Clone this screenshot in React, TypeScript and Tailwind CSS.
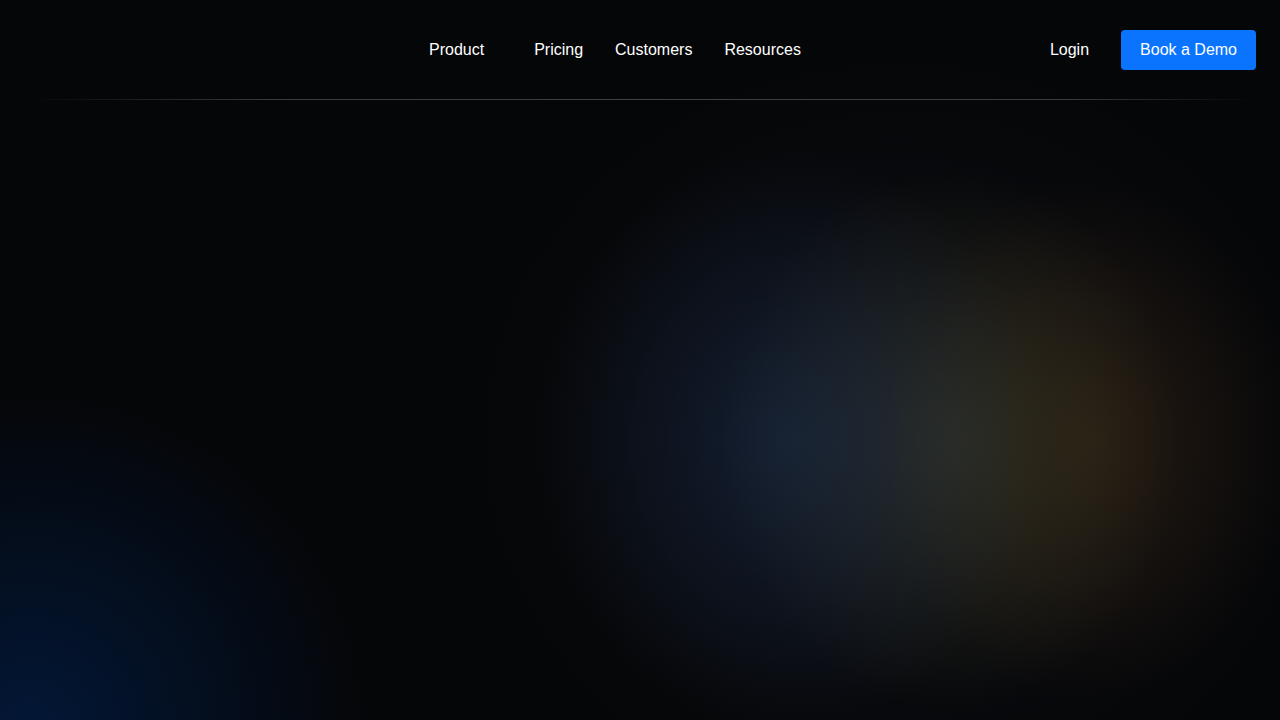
const navItems = [
  { label: "Product", hasMenu: true },
  { label: "Pricing", hasMenu: false },
  { label: "Customers", hasMenu: false },
  { label: "Resources", hasMenu: false },
];

export default function App() {
  return (
    <div
      className="relative h-screen w-full overflow-hidden bg-[#050608] font-['Liberation_Sans',Arial,sans-serif] text-white"
    >
      <div className="pointer-events-none absolute inset-0 bg-[radial-gradient(ellipse_250px_290px_at_790px_440px,rgba(26,46,78,0.55),transparent),radial-gradient(ellipse_230px_270px_at_950px_440px,rgba(60,60,38,0.6),transparent),radial-gradient(ellipse_210px_260px_at_1090px_440px,rgba(66,44,20,0.5),transparent),radial-gradient(ellipse_440px_400px_at_900px_440px,rgba(30,30,40,0.35),transparent),radial-gradient(circle_340px_at_30px_730px,rgba(0,40,100,0.5),transparent)]" />

      <header className="relative px-6">
        <div className="flex h-[99px] items-center">
          <div className="w-[389px]" />

          <nav className="flex items-center">
            {navItems.map((item) => (
              <a
                key={item.label}
                href="#"
                className="flex items-center px-4 text-base leading-6 text-white"
              >
                {item.label}
                {item.hasMenu ? <span className="w-[18px]" /> : null}
              </a>
            ))}
          </nav>

          <div className="ml-auto flex items-center gap-4">
            <a href="#" className="px-4 text-base leading-6 text-white">
              Login
            </a>
            <button
              type="button"
              className="h-10 rounded bg-[#0a74ff] px-[19px] text-base text-white"
            >
              Book a Demo
            </button>
          </div>
        </div>
        <div className="h-px bg-[linear-gradient(to_right,transparent,#3a3a3c_20%,#404042_50%,#3a3a3c_85%,transparent)]" />
      </header>
    </div>
  );
}
